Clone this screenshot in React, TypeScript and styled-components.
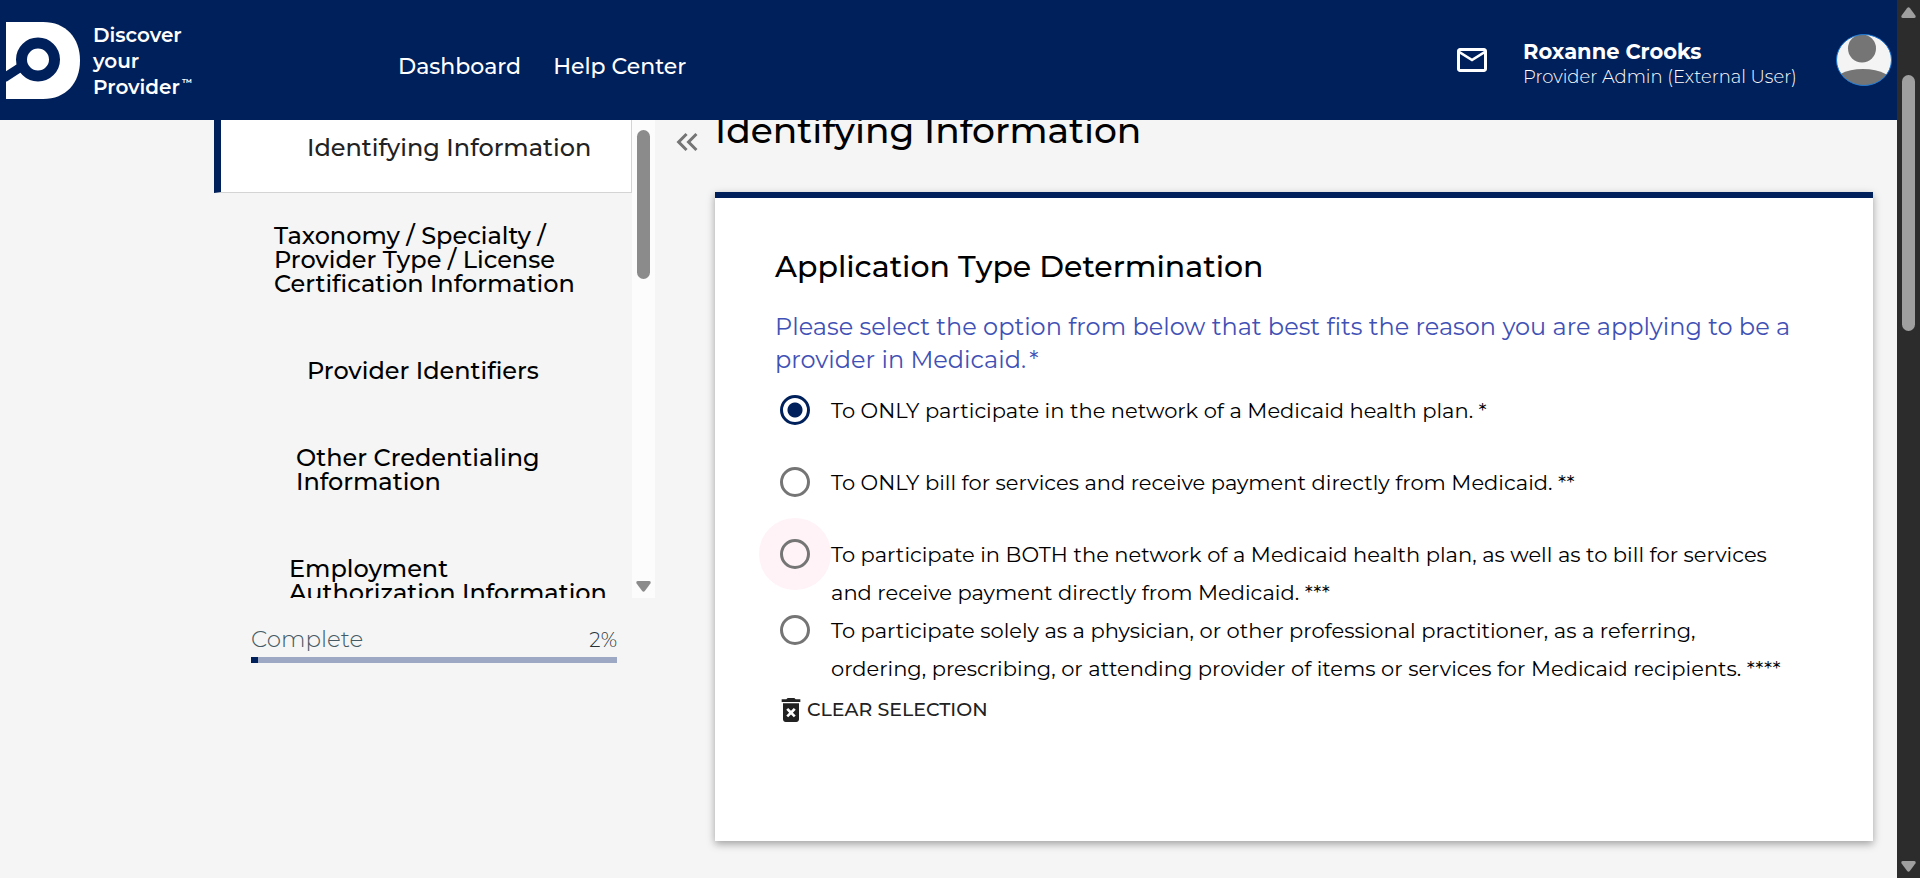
import React, { useState } from "react";
import styled, { createGlobalStyle } from "styled-components";
import { MdDeleteForever, MdKeyboardDoubleArrowLeft, MdMailOutline } from "react-icons/md";

const navy = "#00205b";
const grey = "#f5f5f5";

const GlobalStyle = createGlobalStyle`
  *, *::before, *::after { box-sizing: border-box; }
  body {
    margin: 0;
    background: ${grey};
    color: #000;
    font-family: Montserrat, Inter, "Liberation Sans", sans-serif;
  }
  h1, h2, p, ul, fieldset { margin: 0; padding: 0; border: 0; }
  a { color: inherit; text-decoration: none; }
`;

const Shell = styled.div`
  display: flex;
  height: 100vh;
  overflow: hidden;
`;

const Page = styled.div`
  flex: 1;
  min-width: 0;
  display: flex;
  flex-direction: column;
`;

const Header = styled.header`
  flex: none;
  z-index: 1;
  display: flex;
  height: 120px;
  padding: 0 5px 0 6px;
  background: ${navy};
  color: #fff;
`;

const Brand = styled.a`
  display: flex;
  gap: 13px;
  width: 392px;
  padding-top: 22px;
`;

const LogoMark = styled.svg`
  width: 74px;
  height: 77px;
`;

const BrandName = styled.span`
  font-size: 20px;
  font-weight: 600;
  line-height: 26px;
`;

const Trademark = styled.sup`
  margin-left: 2px;
  font-size: 10px;
  line-height: 0;
`;

const Nav = styled.nav`
  display: flex;
  flex: 1;
  gap: 32px;
  padding-top: 52px;
  font-size: 22px;
  font-weight: 500;
  line-height: 30px;
`;

const IconButton = styled.button`
  display: flex;
  align-items: center;
  justify-content: center;
  width: 36px;
  height: 36px;
  padding: 0;
  border: 0;
  background: none;
  color: inherit;
  font-size: 36px;
`;

const Account = styled.div`
  display: flex;
  gap: 33px;
  padding-top: 34px;
`;

const MailSlot = styled.div`
  padding-top: 8px;
`;

const User = styled.div`
  width: 280px;
  padding-top: 5px;
`;

const UserName = styled.div`
  font-size: 21px;
  font-weight: 700;
  line-height: 26px;
`;

const UserRole = styled.div`
  font-size: 18px;
  font-weight: 300;
  line-height: 24px;
  white-space: nowrap;
`;

const Avatar = styled.svg`
  width: 56px;
  height: 52px;
`;

const Body = styled.div`
  flex: 1;
  min-height: 0;
  display: flex;
  padding: 0 24px 0 214px;
`;

const Sidebar = styled.aside`
  flex: none;
  width: 441px;
`;

const StepPane = styled.div`
  display: flex;
  height: 478px;
  overflow: hidden;
`;

const StepList = styled.ul`
  flex: 1;
  list-style: none;
`;

const Step = styled.li<{ $indent: number; $active?: boolean }>`
  padding: ${(p) => (p.$active ? "16px 0 32px" : "31px 0 32px")};
  padding-left: ${(p) => p.$indent}px;
  border: 0 solid #d4d4d4;
  border-left: 7px solid ${(p) => (p.$active ? navy : "transparent")};
  border-width: ${(p) => (p.$active ? "0 1px 1px 7px" : "0 0 0 7px")};
  background: ${(p) => (p.$active ? "#fff" : "none")};
  color: ${(p) => (p.$active ? "#222" : "#000")};
  font-size: 24px;
  font-weight: 500;
  line-height: 24px;
  white-space: pre-line;
`;

const Rail = styled.div<{ $dark?: boolean }>`
  flex: none;
  display: flex;
  flex-direction: column;
  align-items: center;
  justify-content: space-between;
  width: 23px;
  padding: ${(p) => (p.$dark ? "7px 0 6px" : "0 0 6px")};
  background: ${(p) => (p.$dark ? "#2c2c2c" : "#fcfcfc")};
  color: ${(p) => (p.$dark ? "#9f9f9f" : "#8b8b8b")};
`;

const Thumb = styled.div<{ $top: number; $length: number }>`
  width: 13px;
  height: ${(p) => p.$length}px;
  margin: ${(p) => p.$top}px 0 auto;
  border-radius: 7px;
  background: currentColor;
`;

const Arrow = styled.svg<{ $down?: boolean }>`
  width: 15px;
  height: 11px;
  transform: ${(p) => (p.$down ? "rotate(180deg)" : "none")};
`;

const Progress = styled.div`
  display: flex;
  flex-wrap: wrap;
  align-items: baseline;
  justify-content: space-between;
  margin: 26px 38px 0 37px;
  color: #263238;
  font-size: 20px;
  font-weight: 300;
  line-height: 30px;
`;

const ProgressLabel = styled.span`
  color: #455a64;
  font-size: 23px;
`;

const ProgressTrack = styled.div`
  width: 100%;
  height: 6px;
  margin-top: 2px;
  background: #9da9c4;
`;

const ProgressFill = styled.div`
  width: 2%;
  height: 100%;
  background: ${navy};
`;

const Collapse = styled(IconButton)`
  flex: none;
  width: 60px;
  height: 44px;
  padding-left: 4px;
  color: #757575;
`;

const Content = styled.main`
  flex: 1;
  min-width: 0;
`;

const Title = styled.h1`
  margin: -12px 0 40px;
  font-size: 36px;
  font-weight: 500;
  line-height: 44px;
`;

const Card = styled.section`
  min-height: 649px;
  padding: 49px 60px;
  border-top: 6px solid ${navy};
  background: #fff;
  box-shadow: 0 3px 8px rgba(0, 0, 0, 0.35);
`;

const CardTitle = styled.h2`
  font-size: 30px;
  font-weight: 500;
  line-height: 40px;
`;

const Question = styled.legend`
  padding: 23px 0 16px;
  color: #3f51b5;
  font-size: 24px;
  font-weight: 400;
  line-height: 33px;
  white-space: pre-line;
`;

const Option = styled.label`
  display: flex;
  gap: 21px;
  min-height: 72px;
  padding-left: 5px;
  font-size: 21px;
  line-height: 38px;
  white-space: pre-line;
`;

const Radio = styled.input<{ $hovered?: boolean }>`
  appearance: none;
  flex: none;
  width: 30px;
  height: 30px;
  margin: 3px 0;
  border: 3px solid #757575;
  border-radius: 50%;
  background: ${(p) => (p.$hovered ? "#fff3f8" : "#fff")};
  box-shadow: ${(p) => (p.$hovered ? "0 0 0 21px #fff3f8" : "none")};
  &:checked {
    border-color: ${navy};
    background: radial-gradient(circle, ${navy} 7px, #fff 8px);
  }
`;

const ClearButton = styled.button`
  display: flex;
  align-items: center;
  margin-top: 6px;
  padding: 0;
  border: 0;
  background: none;
  color: #222;
  font: inherit;
  font-size: 19px;
  font-weight: 500;
  line-height: 32px;
  svg { font-size: 32px; }
`;

const steps = [
  { label: "Identifying Information", indent: 86, active: true },
  { label: "Taxonomy / Specialty /\nProvider Type / License\nCertification Information", indent: 53 },
  { label: "Provider Identifiers", indent: 86 },
  { label: "Other Credentialing\nInformation", indent: 75 },
  { label: "Employment\nAuthorization Information", indent: 68 },
];

const options = [
  "To ONLY participate in the network of a Medicaid health plan. *",
  "To ONLY bill for services and receive payment directly from Medicaid. **",
  "To participate in BOTH the network of a Medicaid health plan, as well as to bill for services\nand receive payment directly from Medicaid. ***",
  "To participate solely as a physician, or other professional practitioner, as a referring,\nordering, prescribing, or attending provider of items or services for Medicaid recipients. ****",
];

function ScrollArrow({ down }: { down?: boolean }) {
  return (
    <Arrow $down={down} viewBox="0 0 15 11" aria-hidden="true">
      <path d="M6 1.2Q7.5-.8 9 1.2L14.4 8.6Q15.4 11 13 11H2Q-.4 11 .6 8.6Z" fill="currentColor" />
    </Arrow>
  );
}

export default function App() {
  const [selected, setSelected] = useState<number | null>(0);

  return (
    <>
      <GlobalStyle />
      <Shell>
        <Page>
          <Header>
            <Brand href="#">
              <LogoMark viewBox="0 0 74 77" aria-hidden="true">
                <path d="M0 0H37C60 0 74 16 74 38.500S60 77 37 77H0Z" fill="#fff" />
                <path d="M-2 56 18 43" stroke={navy} strokeWidth="9" />
                <circle cx="32" cy="37.500" r="16.500" fill="#fff" stroke={navy} strokeWidth="11" />
              </LogoMark>
              <BrandName>
                Discover
                <br />
                your
                <br />
                Provider<Trademark>™</Trademark>
              </BrandName>
            </Brand>
            <Nav>
              <a href="#dashboard">Dashboard</a>
              <a href="#help">Help Center</a>
            </Nav>
            <Account>
              <MailSlot>
                <IconButton aria-label="Messages">
                  <MdMailOutline />
                </IconButton>
              </MailSlot>
              <User>
                <UserName>Roxanne Crooks</UserName>
                <UserRole>Provider Admin (External User)</UserRole>
              </User>
              <Avatar viewBox="0 0 56 52" role="img" aria-label="Profile">
                <clipPath id="face">
                  <ellipse cx="28" cy="26" rx="27.500" ry="25.500" />
                </clipPath>
                <g clipPath="url(#face)">
                  <path d="M0 0H56V52H0Z" fill="#f4f4f4" />
                  <circle cx="26" cy="14.500" r="14" fill="#757575" />
                  <ellipse cx="27" cy="52" rx="32" ry="17" fill="#757575" />
                </g>
                <ellipse cx="28" cy="26" rx="27.500" ry="25.500" fill="none" stroke="#1976d2" />
              </Avatar>
            </Account>
          </Header>
          <Body>
            <Sidebar>
              <StepPane>
                <StepList>
                  {steps.map((s) => (
                    <Step key={s.label} $indent={s.indent} $active={s.active}>
                      <a href="#step">{s.label}</a>
                    </Step>
                  ))}
                </StepList>
                <Rail>
                  <Thumb $top={10} $length={149} />
                  <ScrollArrow down />
                </Rail>
              </StepPane>
              <Progress>
                <ProgressLabel>Complete</ProgressLabel>
                <span>2%</span>
                <ProgressTrack>
                  <ProgressFill />
                </ProgressTrack>
              </Progress>
            </Sidebar>
            <Collapse aria-label="Collapse menu">
              <MdKeyboardDoubleArrowLeft />
            </Collapse>
            <Content>
              <Title>Identifying Information</Title>
              <Card>
                <CardTitle>Application Type Determination</CardTitle>
                <fieldset>
                  <Question>
                    {"Please select the option from below that best fits the reason you are applying to be a\nprovider in Medicaid.\u2009*"}
                  </Question>
                  {options.map((text, i) => (
                    <Option key={text}>
                      <Radio
                        type="radio"
                        name="application-type"
                        $hovered={i === 2}
                        checked={selected === i}
                        onChange={() => setSelected(i)}
                      />
                      <span>{text}</span>
                    </Option>
                  ))}
                </fieldset>
                <ClearButton type="button" onClick={() => setSelected(null)}>
                  <MdDeleteForever />
                  CLEAR SELECTION
                </ClearButton>
              </Card>
            </Content>
          </Body>
        </Page>
        <Rail $dark>
          <ScrollArrow />
          <Thumb $top={57} $length={256} />
          <ScrollArrow down />
        </Rail>
      </Shell>
    </>
  );
}
